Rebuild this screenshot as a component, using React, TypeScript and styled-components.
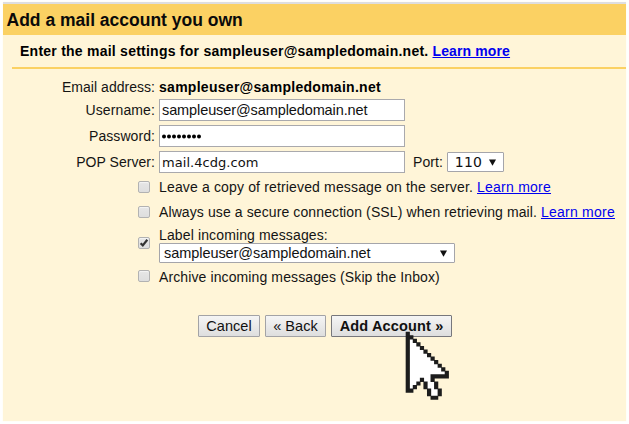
import React from "react";
import styled, { createGlobalStyle } from "styled-components";

const GlobalStyle = createGlobalStyle`
  body { margin: 0; background: #fff; }
  * { box-sizing: border-box; }
`;

const Page = styled.div`
  position: relative;
  width: 629px;
  height: 424px;
  padding: 2px 3px 3px;
  background: #fff;
  font: 14px/16px "Liberation Sans", Arial, sans-serif;
  color: #141414;
`;

const Panel = styled.main`
  height: 419px;
  background: #fff5d8;
  border-top: 2px solid #dedee0;
  box-shadow: 0 0 1px #fff5d8;
`;

const Header = styled.h1`
  height: 31px;
  margin: 0;
  padding: 6px 0 0 3.5px;
  background: #fbd163;
  color: #0a0a0a;
  font-size: 17.5px;
  line-height: 20px;
  white-space: nowrap;
`;

const Intro = styled.div`
  display: flex;
  height: 34px;
  margin-left: 9px;
  padding: 8px 0 0 8px;
  border-bottom: 2px solid #fbd163;
  color: #000;
  font-weight: bold;
  white-space: nowrap;
`;

const Text = styled.span<{ $spacing?: number }>`
  letter-spacing: ${(p) => p.$spacing ?? 0}px;
  white-space: nowrap;
`;

const StrongText = styled(Text)`
  color: #000;
  font-weight: bold;
`;

const Link = styled.a<{ $spacing: number }>`
  margin-left: 4px;
  color: #0000ee;
  letter-spacing: ${(p) => p.$spacing}px;
  text-decoration: underline;
  white-space: nowrap;
`;

const Fields = styled.div`
  display: grid;
  grid-template-columns: 152px 246px auto;
  grid-template-rows: 16px 22px 22px 22px;
  row-gap: 4px;
  column-gap: 4px;
  align-items: center;
  margin-top: 10px;
`;

const Label = styled.label<{ $spacing: number }>`
  text-align: right;
  letter-spacing: ${(p) => p.$spacing}px;
  white-space: nowrap;
`;

const Input = styled.div<{ $wide?: boolean; $spacing: number }>`
  height: 22px;
  padding: 2px 0 0 2px;
  border: 1px solid #a9a9ad;
  background: #fff;
  color: #111;
  font: ${(p) =>
    p.$wide ? '13px/17px "DejaVu Sans", Verdana, sans-serif' : '14.5px/16px "Liberation Sans", Arial, sans-serif'};
  letter-spacing: ${(p) => p.$spacing}px;
`;

const Dots = styled.svg`
  display: block;
  width: 44px;
  height: 16px;
`;

const PortGroup = styled.div`
  display: flex;
  align-items: center;
  gap: 4px;
  padding-left: 4px;
`;

const Select = styled.div<{ $width: number; $wide?: boolean }>`
  display: flex;
  align-items: center;
  justify-content: space-between;
  width: ${(p) => p.$width}px;
  height: 20px;
  padding: 0 7px 0 ${(p) => (p.$wide ? 7 : 4)}px;
  border: 1px solid #a5a5aa;
  border-radius: 1px;
  background: #fff;
  color: #111;
  font: ${(p) =>
    p.$wide ? '14px/16px "DejaVu Sans", Verdana, sans-serif' : '14.5px/16px "Liberation Sans", Arial, sans-serif'};
`;

const Options = styled.div`
  display: grid;
  grid-template-columns: 12px auto;
  grid-template-rows: 26px 24px 42px 20px;
  column-gap: 9px;
  align-items: center;
  margin: 1px 0 0 135px;
`;

const Checkbox = styled.div<{ $raised?: boolean }>`
  width: 12px;
  height: 12px;
  margin-bottom: ${(p) => (p.$raised ? 4 : 0)}px;
  border: 1px solid #b2b2b2;
  border-radius: 2px;
  background: linear-gradient(#e6e6e6, #dedede);
  box-shadow: inset 0 1px 1px #f4f4f4;
`;

const Mark = styled.svg`
  display: block;
`;

const Option = styled.div<{ $low?: boolean }>`
  display: flex;
  padding-top: ${(p) => (p.$low ? 2 : 0)}px;
  white-space: nowrap;
`;

const LabelOption = styled.div`
  display: flex;
  flex-direction: column;
`;

const Buttons = styled.div`
  display: flex;
  gap: 5px;
  margin: 29px 0 0 195px;
`;

const Button = styled.button<{ $width: number; $main?: boolean; $spacing: number }>`
  width: ${(p) => p.$width}px;
  height: 22px;
  padding: 0;
  border: 1px solid ${(p) => (p.$main ? "#77777c" : "#a3a3a6")};
  border-radius: 1px;
  background: linear-gradient(#f5f5f5, #dedede);
  color: #111;
  font: inherit;
  font-size: 14.5px;
  font-weight: ${(p) => (p.$main ? "bold" : "normal")};
  letter-spacing: ${(p) => p.$spacing}px;
  white-space: nowrap;
`;

const Cursor = styled.svg`
  position: absolute;
  left: 406.4px;
  top: 332.3px;
  width: 42.6px;
  height: 67.5px;
  overflow: visible;
`;

// "X" is outline, "." is the white interior, a space is transparent.
const arrow = [
  "X",
  "XX",
  "X.X",
  "X..X",
  "X...X",
  "X....X",
  "X.....X",
  "X......X",
  "X.......X",
  "X........X",
  "X.........X",
  "X..........X",
  "X......XXXXX",
  "X...X..X",
  "X..X X..X",
  "X.X  X..X",
  "XX    X..X",
  "      X..X",
  "       XX",
];

const cells = (mark: string, grow: number) => {
  const s = 1 + grow * 2;
  return arrow
    .flatMap((row, y) => [...row].map((c, x) => (c === mark ? `M${x - grow} ${y - grow}h${s}v${s}h${-s}z` : "")))
    .join("");
};

const Pointer = () => (
  <Cursor viewBox="0 0 12 19" preserveAspectRatio="none">
    <path d={cells(".", 0.1)} fill="#fff" />
    <path d={cells("X", 0.09)} fill="#1c1c1c" />
  </Cursor>
);

const Arrow = () => (
  <svg width="7" height="7" viewBox="0 0 7 7">
    <path d="M0 .4h7L3.5 6.8z" fill="#111" />
  </svg>
);

const Check = ({ checked }: { checked?: boolean }) => (
  <Checkbox role="checkbox" aria-checked={!!checked} $raised={checked}>
    {checked && (
      <Mark width="10" height="10" viewBox="0 0 10 10">
        <path d="M1.6 5.2L3.8 7.4L8.3 1.8" fill="none" stroke="#333" strokeWidth="2.2" />
      </Mark>
    )}
  </Checkbox>
);

export default function App() {
  return (
    <Page>
      <GlobalStyle />
      <Panel>
        <Header>Add a mail account you own</Header>
        <Intro>
          <Text $spacing={0.243}>Enter the mail settings for sampleuser@sampledomain.net.</Text>
          <Link $spacing={0.13}>Learn more</Link>
        </Intro>
        <Fields>
          <Label $spacing={0.03}>Email address:</Label>
          <StrongText $spacing={0.28}>sampleuser@sampledomain.net</StrongText>
          <span />
          <Label $spacing={0.12}>Username:</Label>
          <Input $spacing={-0.1}>sampleuser@sampledomain.net</Input>
          <span />
          <Label $spacing={0.07}>Password:</Label>
          <Input $spacing={0}>
            <Dots viewBox="0 0 44 16">
              {Array.from({ length: 8 }, (_, i) => (
                <circle key={i} cx={2 + i * 5} cy="8.4" r="2" fill="#000" />
              ))}
            </Dots>
          </Input>
          <span />
          <Label $spacing={0.04}>POP Server:</Label>
          <Input $wide $spacing={0.05}>mail.4cdg.com</Input>
          <PortGroup>
            <Text $spacing={0.05}>Port:</Text>
            <Select $width={57} $wide>
              <Text $spacing={0.2}>110</Text>
              <Arrow />
            </Select>
          </PortGroup>
        </Fields>
        <Options>
          <Check />
          <Option>
            <Text $spacing={0.154}>Leave a copy of retrieved message on the server.</Text>
            <Link $spacing={0.24}>Learn more</Link>
          </Option>
          <Check />
          <Option>
            <Text $spacing={0.104}>Always use a secure connection (SSL) when retrieving mail.</Text>
            <Link $spacing={0.24}>Learn more</Link>
          </Option>
          <Check checked />
          <LabelOption>
            <Text $spacing={0.13}>Label incoming messages:</Text>
            <Select $width={296}>
              <Text $spacing={-0.06}>sampleuser@sampledomain.net</Text>
              <Arrow />
            </Select>
          </LabelOption>
          <Check />
          <Option $low>
            <Text $spacing={0.11}>Archive incoming messages (Skip the Inbox)</Text>
          </Option>
        </Options>
        <Buttons>
          <Button $width={62} $spacing={0.05}>Cancel</Button>
          <Button $width={61} $spacing={0.05}>« Back</Button>
          <Button $width={121} $main $spacing={0.15}>Add Account »</Button>
        </Buttons>
      </Panel>
      <Pointer />
    </Page>
  );
}
